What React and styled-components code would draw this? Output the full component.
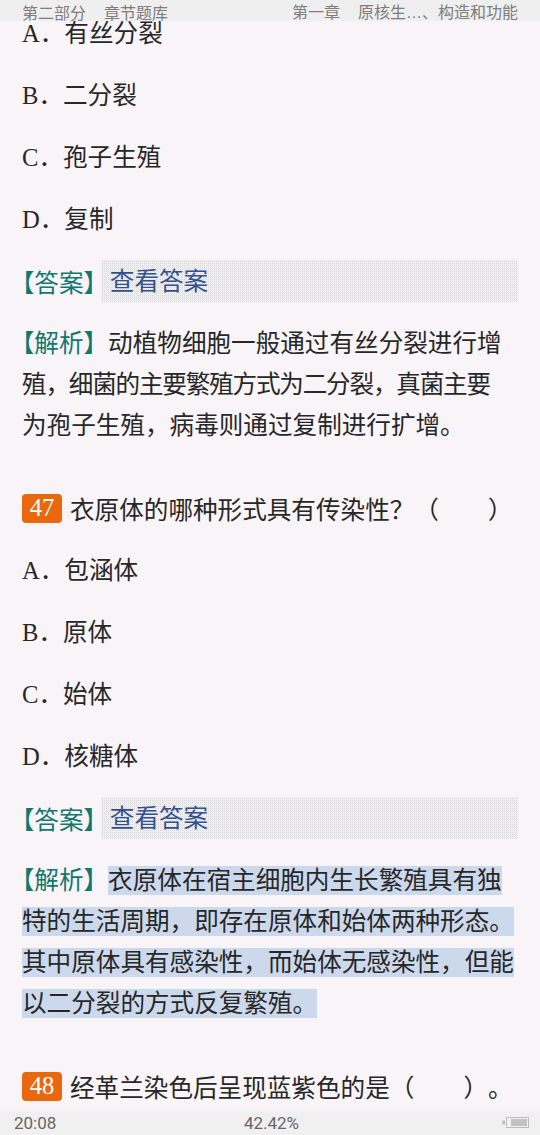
import React from "react";
import styled, { createGlobalStyle } from "styled-components";

const GlobalStyle = createGlobalStyle`
  html, body {
    margin: 0;
    padding: 0;
    background: #f8f4f8;
  }
`;

const Page = styled.div`
  position: relative;
  width: 540px;
  height: 1135px;
  overflow: hidden;
  background: #f8f4f8;
  color: #272727;
  font-family: "Liberation Serif", "Noto Sans CJK SC", serif;
  font-size: 24.6px;
  text-spacing-trim: space-all;
`;

const TopBar = styled.div`
  position: absolute;
  top: 0;
  left: 0;
  right: 0;
  height: 21px;
  padding: 2px 22px 0;
  box-sizing: border-box;
  display: flex;
  justify-content: space-between;
  align-items: center;
  background: #efefef;
  color: #7d7d7d;
  font-family: "Noto Sans CJK SC", sans-serif;
  font-size: 16px;
  line-height: 16px;
  z-index: 2;
`;

const Crumbs = styled.div`
  display: flex;
  gap: 18px;
`;

const Dots = styled.span`
  font-family: "Liberation Sans", sans-serif;
`;

const Content = styled.div`
  display: flex;
  flex-direction: column;
  gap: 21px;
  padding: 12.5px 22px 0;
`;

const Option = styled.div`
  line-height: 41px;
  white-space: nowrap;
`;

const Question = styled.div`
  display: flex;
  align-items: center;
  height: 41px;
  margin-top: 21px;
  white-space: nowrap;
`;

const Badge = styled.span`
  display: inline-flex;
  align-items: center;
  justify-content: center;
  width: 40px;
  height: 29px;
  margin-right: 8px;
  border-radius: 4px;
  background: #e9680d;
  color: #fff;
  font-family: "Liberation Serif", serif;
  font-size: 24.6px;
`;

const AnswerRow = styled.div`
  display: flex;
  align-items: center;
  height: 41px;
  white-space: nowrap;
`;

const Label = styled.span`
  color: #10786e;
`;

const Halt = styled.span`
  font-feature-settings: "halt";
`;

const AnswerBox = styled.span`
  flex: 1;
  display: flex;
  align-items: center;
  height: 42px;
  box-sizing: border-box;
  margin-left: 5px;
  padding: 0 0 5px 9px;
  color: #34508c;
  background-color: #dadada;
  background-image:
    linear-gradient(90deg, #f0eef0 1px, transparent 1px),
    linear-gradient(#f0eef0 1px, transparent 1px);
  background-size: 2px 2px;
`;

const Analysis = styled.div`
  display: flex;
  flex-direction: column;
`;

const Line = styled.div`
  line-height: 41px;
  white-space: nowrap;
  letter-spacing: ${(p) => (p.$tight ? "-1.2px" : "0")};
`;

const Mark = styled.span`
  background: #ccd8ec;
  padding: 1px 0;
`;

const BottomBar = styled.div`
  position: absolute;
  left: 0;
  right: 0;
  bottom: 0;
  height: 24px;
  padding: 0 11px 0 14px;
  display: grid;
  grid-template-columns: 1fr auto 1fr;
  align-items: center;
  background: #f0f0f0;
  color: #666;
  font-family: Roboto, "Liberation Sans", sans-serif;
  font-size: 17px;
  z-index: 2;
`;

const Battery = styled.svg`
  justify-self: end;
  display: block;
`;

function LabelText({ text, closeHalf }) {
  return (
    <Label>
      <Halt>【</Halt>
      {text}
      {closeHalf ? <Halt>】</Halt> : "】"}
    </Label>
  );
}

function Answer() {
  return (
    <AnswerRow>
      <LabelText text="答案" closeHalf />
      <AnswerBox>查看答案</AnswerBox>
    </AnswerRow>
  );
}

const optionsA = ["A．有丝分裂", "B．二分裂", "C．孢子生殖", "D．复制"];
const optionsB = ["A．包涵体", "B．原体", "C．始体", "D．核糖体"];

const marked = [
  "特的生活周期，即存在原体和始体两种形态。",
  "其中原体具有感染性，而始体无感染性，但能",
  "以二分裂的方式反复繁殖。",
];

export default function App() {
  return (
    <>
      <GlobalStyle />
      <Page>
        <TopBar>
          <Crumbs>
            <span>第二部分</span>
            <span>章节题库</span>
          </Crumbs>
          <Crumbs>
            <span>第一章</span>
            <span>
              原核生<Dots>…</Dots>、构造和功能
            </span>
          </Crumbs>
        </TopBar>

        <Content>
          {optionsA.map((o) => (
            <Option key={o}>{o}</Option>
          ))}
          <Answer />
          <Analysis>
            <Line>
              <LabelText text="解析" />
              动植物细胞一般通过有丝分裂进行增
            </Line>
            <Line $tight>殖，细菌的主要繁殖方式为二分裂，真菌主要</Line>
            <Line>为孢子生殖，病毒则通过复制进行扩增。</Line>
          </Analysis>

          <Question>
            <Badge>47</Badge>
            衣原体的哪种形式具有传染性？（　　）
          </Question>
          {optionsB.map((o) => (
            <Option key={o}>{o}</Option>
          ))}
          <Answer />
          <Analysis>
            <Line>
              <LabelText text="解析" />
              <Mark>衣原体在宿主细胞内生长繁殖具有独</Mark>
            </Line>
            {marked.map((l) => (
              <Line key={l}>
                <Mark>{l}</Mark>
              </Line>
            ))}
          </Analysis>

          <Question>
            <Badge>48</Badge>
            经革兰染色后呈现蓝紫色的是（　　）。
          </Question>
        </Content>

        <BottomBar>
          <span>20:08</span>
          <span>42.42%</span>
          <Battery width="27" height="12" viewBox="0 0 27 12">
            <rect x="0.5" y="3.5" width="2.5" height="4" fill="#bdbdbd" />
            <rect x="4.5" y="0.5" width="22" height="10" fill="none" stroke="#bdbdbd" />
            <rect x="9" y="2" width="16" height="7" fill="#c2c2c2" />
          </Battery>
        </BottomBar>
      </Page>
    </>
  );
}
